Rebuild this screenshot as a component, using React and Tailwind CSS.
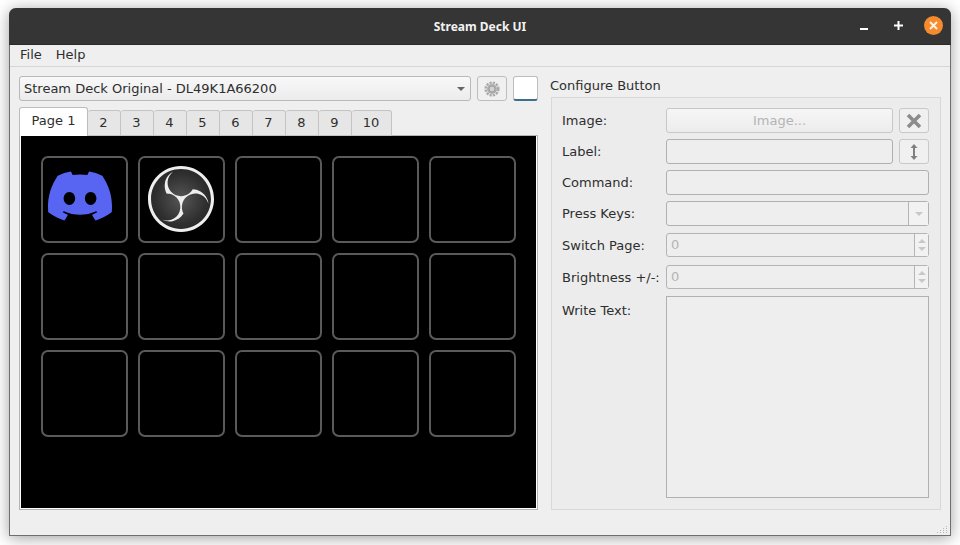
import { SiDiscord, SiObsstudio } from "react-icons/si";

const tabs = ["2", "3", "4", "5", "6", "7", "8", "9", "10"];
const keys = Array.from({ length: 15 }, (_, i) => i);

function Field({ label, children, className = "h-[25px] mb-[6px]", labelClass = "pt-[4px]" }) {
    return (
        <div className={`flex ${className}`}>
            <div className={`w-[104px] shrink-0 leading-[18px] ${labelClass}`}>{label}</div>
            {children}
        </div>
    );
}

function Spin() {
    return (
        <div className="flex-1 flex rounded-[3px] border border-[#b4b4b4] bg-[#eeeeee]">
            <div className="flex-1 pl-[4px] leading-[22px] text-[#b4b4b4]">0</div>
            <div className="w-[14px] border-l border-[#b4b4b4] flex flex-col items-center justify-center gap-[4px] bg-[#f2f2f2]">
                <div className="w-0 h-0 border-x-[4px] border-x-transparent border-b-[4px] border-b-[#c8c8c8]" />
                <div className="w-0 h-0 border-x-[4px] border-x-transparent border-t-[4px] border-t-[#c8c8c8]" />
            </div>
        </div>
    );
}

function KeyIcon({ index }) {
    if (index === 0) return <SiDiscord className="text-[#5865f2] w-[64px] h-[64px] -ml-[10px] -mt-[7px]" />;
    if (index === 1) {
        return (
            <div className="relative w-[66px] h-[66px] -ml-[1px] -mt-[1px] rounded-full bg-[radial-gradient(circle,#565656_0%,#2e2e2e_55%,#1c1c1c_100%)]">
                <SiObsstudio className="absolute inset-0 text-[#eeeeee] w-[66px] h-[66px]" />
            </div>
        );
    }
    return null;
}

export default function App() {
    return (
        <div className="w-[960px] h-[545px] bg-[#ffffff] pt-[8px] pl-[9px] font-['DejaVu_Sans',sans-serif] text-[13px] text-[#2e2e2e] overflow-hidden">
            <div className="relative w-[942px] h-[528px] rounded-t-[7px] border-x border-b border-[#6f6f6f] bg-[#efefef] shadow-[0_2px_16px_rgba(0,0,0,0.38)] flex flex-col">
                {/* title bar */}
                <div className="h-[37px] -mx-px rounded-t-[7px] bg-[#353535] border-b border-[#2a2a2a] relative flex items-center justify-center shrink-0">
                    <span className="font-['Noto_Sans',sans-serif] font-bold text-[12px] text-[#f2f2f2] pt-px">Stream Deck UI</span>
                    <div className="absolute right-[8px] top-[8px] flex items-center">
                        <div className="w-[8px] h-[2px] bg-white mr-[26px] mt-[6px]" />
                        <svg width="9" height="9" viewBox="0 0 9 9" className="mr-[21px]">
                            <path d="M4.5 0v9M0 4.5h9" stroke="#fff" strokeWidth="2" />
                        </svg>
                        <div className="w-[19px] h-[19px] rounded-full bg-[#f58b2c] flex items-center justify-center">
                            <svg width="9" height="9" viewBox="0 0 9 9">
                                <path d="M1 1l7 7M8 1l-7 7" stroke="#fdf1e4" strokeWidth="2" />
                            </svg>
                        </div>
                    </div>
                </div>

                {/* menu */}
                <div className="h-[22px] flex items-center gap-[14px] pl-[10px] border-b border-[#d6d6d6] shrink-0 pb-[2px]">
                    <span>File</span>
                    <span>Help</span>
                </div>

                <div className="flex flex-1 pt-[9px] pl-[9px]">
                    {/* left column */}
                    <div className="w-[519px] shrink-0">
                        <div className="flex h-[25px]">
                            <div className="w-[452px] rounded-[3px] border border-[#b9b9b9] bg-[linear-gradient(#f8f8f8,#ececec)] flex items-center pl-[4px] pr-[5px]">
                                <span className="flex-1">Stream Deck Original - DL49K1A66200</span>
                                <div className="w-0 h-0 border-x-[4px] border-x-transparent border-t-[4px] border-t-[#666666]" />
                            </div>
                            <div className="ml-[6px] w-[30px] rounded-[3px] border border-[#bdbdbd] bg-[#f0f0f0] flex items-center justify-center">
                                <svg width="16" height="16" viewBox="-8 -8 16 16">
                                    <circle r="6.3" fill="none" stroke="#aaaaaa" strokeWidth="2.6" strokeDasharray="2.2 1.1" />
                                    <circle r="5" fill="#b0b0b0" />
                                    <circle r="3" fill="#d2d2d2" stroke="#9c9c9c" strokeWidth="1" />
                                </svg>
                            </div>
                            <div className="ml-[6px] w-[25px] rounded-[3px] border border-[#bdbdbd] border-b-2 border-b-[#3d6d8f] bg-white" />
                        </div>

                        {/* tabs */}
                        <div className="flex items-end h-[29px] mt-[6px] relative z-10 -mb-px">
                            <div className="w-[69px] h-[29px] bg-white rounded-t-[3px] border border-b-0 border-[#bdbdbd] flex items-center justify-center pb-[3px]">Page 1</div>
                            {tabs.map((t) => (
                                <div key={t} className={`${t === "10" ? "w-[40px]" : "w-[33px]"} h-[26px] bg-[#e6e6e6] rounded-t-[3px] border border-l-0 border-[#c4c4c4] flex items-center justify-center pr-px`}>
                                    {t}
                                </div>
                            ))}
                        </div>

                        {/* key grid */}
                        <div className="w-[519px] h-[375px] border border-[#b4b4b4] bg-white pl-px pr-px pb-px">
                            <div className="h-full bg-black pt-[20px] pl-[20px]">
                                <div className="grid grid-cols-[repeat(5,87px)] grid-rows-[repeat(3,87px)] gap-[10px]">
                                    {keys.map((k) => (
                                        <div key={k} className="rounded-[7px] border-2 border-[#5a5a5a] flex items-center justify-center">
                                            <KeyIcon index={k} />
                                        </div>
                                    ))}
                                </div>
                            </div>
                        </div>
                    </div>

                    {/* configure */}
                    <div className="ml-[13px] w-[390px] shrink-0">
                        <div className="h-[21px] leading-[19px] -ml-px">Configure Button</div>
                        <div className="h-[413px] border border-[#d8d8d8] bg-[#ececec] pt-[10px] pl-[10px] pr-[11px]">
                            <Field label="Image:">
                                <div className="w-[227px] rounded-[3px] border border-[#c8c8c8] bg-[linear-gradient(#f6f6f6,#ececec)] flex items-center justify-center text-[#b4b4b4]">Image...</div>
                                <div className="ml-[6px] w-[30px] rounded-[3px] border border-[#c8c8c8] bg-[#f0f0f0] flex items-center justify-center">
                                    <svg width="16" height="16" viewBox="0 0 16 16">
                                        <path d="M2 2l12 12M14 2L2 14" stroke="#8c8c8c" strokeWidth="3.6" />
                                    </svg>
                                </div>
                            </Field>
                            <Field label="Label:">
                                <div className="w-[227px] rounded-[3px] border border-[#b0b0b0] bg-[#eeeeee]" />
                                <div className="ml-[6px] w-[30px] rounded-[3px] border border-[#c8c8c8] bg-[#f0f0f0] flex items-center justify-center">
                                    <svg width="10" height="16" viewBox="0 0 10 16">
                                        <path d="M5 3v10" stroke="#808080" strokeWidth="2" />
                                        <path d="M5 0l3.5 4h-7zM5 16l3.5-4h-7z" fill="#808080" />
                                    </svg>
                                </div>
                            </Field>
                            <Field label="Command:">
                                <div className="flex-1 rounded-[3px] border border-[#b0b0b0] bg-[#eeeeee]" />
                            </Field>
                            <Field label="Press Keys:" className="h-[25px] mb-[7px]">
                                <div className="flex-1 flex rounded-[3px] border border-[#b0b0b0] bg-[#eeeeee]">
                                    <div className="flex-1" />
                                    <div className="w-[20px] border-l border-[#b4b4b4] bg-[#f2f2f2] flex items-center justify-center">
                                        <div className="w-0 h-0 border-x-[4px] border-x-transparent border-t-[4px] border-t-[#c8c8c8]" />
                                    </div>
                                </div>
                            </Field>
                            <Field label="Switch Page:" className="h-[24px] mb-[8px]">
                                <Spin />
                            </Field>
                            <Field label="Brightness +/-:" className="h-[24px] mb-[7px]">
                                <Spin />
                            </Field>
                            <Field label="Write Text:" className="h-[202px]" labelClass="pt-[6px]">
                                <div className="flex-1 border border-[#b0b0b0] bg-[#eeeeee]" />
                            </Field>
                        </div>
                    </div>
                </div>

                {/* size grip */}
                <div className="absolute right-[2px] bottom-[2px] grid grid-cols-[repeat(4,2px)] gap-[1px]">
                    {[0, 0, 0, 1, 0, 0, 1, 1, 0, 1, 1, 1, 1, 1, 1, 1].map((on, i) => (
                        <div key={i} className={`w-[1px] h-[1px] ${on ? "bg-[#b8b8b8]" : ""}`} />
                    ))}
                </div>
            </div>
        </div>
    );
}
